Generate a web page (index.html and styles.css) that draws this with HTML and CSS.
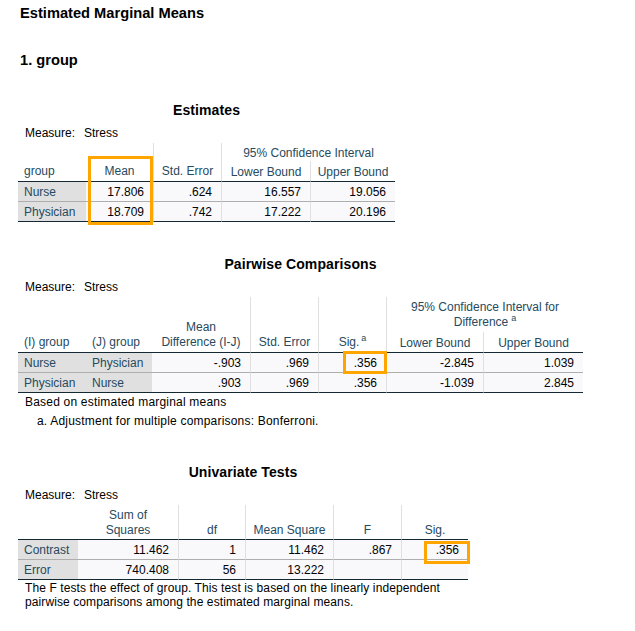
FILE: index.html
```html
<!DOCTYPE html>
<html>
<head>
<meta charset="utf-8">
<title>Estimated Marginal Means</title>
<link rel="stylesheet" href="styles.css">
</head>
<body>
<div class="page">
  <h1 class="title">Estimated Marginal Means</h1>
  <h2 class="subtitle">1. group</h2>

  <section class="block">
    <div class="caption w-est">Estimates</div>
    <div class="measure"><span class="mlabel">Measure:</span>Stress</div>
    <div class="tablewrap">
      <table class="spss t-est">
        <colgroup>
          <col class="e1"><col class="e2"><col class="e3"><col class="e4"><col class="e5">
        </colgroup>
        <thead>
          <tr>
            <th rowspan="2" class="lab hb">group</th>
            <th rowspan="2" class="hb">Mean</th>
            <th rowspan="2" class="sep hb">Std. Error</th>
            <th colspan="2" class="sep top1">95% Confidence Interval</th>
          </tr>
          <tr>
            <th class="sep hb l20">Lower Bound</th>
            <th class="sep hb l20">Upper Bound</th>
          </tr>
        </thead>
        <tbody>
          <tr>
            <td class="lab">Nurse</td>
            <td>17.806</td>
            <td class="sep">.624</td>
            <td class="sep">16.557</td>
            <td class="sep">19.056</td>
          </tr>
          <tr class="lastrow">
            <td class="lab">Physician</td>
            <td>18.709</td>
            <td class="sep">.742</td>
            <td class="sep">17.222</td>
            <td class="sep">20.196</td>
          </tr>
        </tbody>
      </table>
      <div class="hl hl-est"></div>
    </div>
  </section>

  <section class="block">
    <div class="caption w-pw gap33">Pairwise Comparisons</div>
    <div class="measure"><span class="mlabel">Measure:</span>Stress</div>
    <div class="tablewrap">
      <table class="spss t-pw">
        <colgroup>
          <col class="p1"><col class="p2"><col class="p3"><col class="p4"><col class="p5"><col class="p6"><col class="p7">
        </colgroup>
        <thead>
          <tr>
            <th rowspan="2" class="lab hb">(I) group</th>
            <th rowspan="2" class="lab hb">(J) group</th>
            <th rowspan="2" class="hb">Mean<br>Difference (I-J)</th>
            <th rowspan="2" class="sep hb">Std. Error</th>
            <th rowspan="2" class="sep hb">Sig.<span class="sup">a</span></th>
            <th colspan="2" class="sep two">95% Confidence Interval for<br>Difference<span class="sup sp3">a</span></th>
          </tr>
          <tr>
            <th class="sep hb l20">Lower Bound</th>
            <th class="sep hb l20">Upper Bound</th>
          </tr>
        </thead>
        <tbody>
          <tr>
            <td class="lab">Nurse</td>
            <td class="lab">Physician</td>
            <td>-.903</td>
            <td class="sep">.969</td>
            <td class="sep">.356</td>
            <td class="sep">-2.845</td>
            <td class="sep">1.039</td>
          </tr>
          <tr class="lastrow">
            <td class="lab">Physician</td>
            <td class="lab">Nurse</td>
            <td>.903</td>
            <td class="sep">.969</td>
            <td class="sep">.356</td>
            <td class="sep">-1.039</td>
            <td class="sep">2.845</td>
          </tr>
        </tbody>
      </table>
      <div class="hl hl-pw"></div>
    </div>
    <div class="foot">
      <div>Based on estimated marginal means</div>
      <div class="indent">a. Adjustment for multiple comparisons: Bonferroni.</div>
    </div>
  </section>

  <section class="block">
    <div class="caption w-uv">Univariate Tests</div>
    <div class="measure"><span class="mlabel">Measure:</span>Stress</div>
    <div class="tablewrap">
      <table class="spss t-uv">
        <colgroup>
          <col class="u1"><col class="u2"><col class="u3"><col class="u4"><col class="u5"><col class="u6">
        </colgroup>
        <thead>
          <tr class="uvhead">
            <th class="lab hb"></th>
            <th class="hb">Sum of<br>Squares</th>
            <th class="sep hb">df</th>
            <th class="sep hb">Mean Square</th>
            <th class="sep hb">F</th>
            <th class="sep hb">Sig.</th>
          </tr>
        </thead>
        <tbody>
          <tr>
            <td class="lab">Contrast</td>
            <td>11.462</td>
            <td class="sep">1</td>
            <td class="sep">11.462</td>
            <td class="sep">.867</td>
            <td class="sep">.356</td>
          </tr>
          <tr class="lastrow">
            <td class="lab">Error</td>
            <td>740.408</td>
            <td class="sep">56</td>
            <td class="sep">13.222</td>
            <td class="sep"></td>
            <td class="sep"></td>
          </tr>
        </tbody>
      </table>
      <div class="hl hl-uv"></div>
    </div>
    <div class="ufoot">The F tests the effect of group. This test is based on the linearly independent pairwise comparisons among the estimated marginal means.</div>
  </section>
</div>
</body>
</html>
```

FILE: styles.css
```css
* { box-sizing: border-box; }

body {
  margin: 0;
  background: #ffffff;
  font-family: "Liberation Sans", Arial, sans-serif;
  color: #000000;
}

.page {
  padding: 4px 0 0 18px;
}

.title,
.subtitle {
  margin: 0;
  padding-left: 2px;
  font-size: 14.67px;
  font-weight: bold;
  line-height: 18px;
}

.subtitle { margin-top: 29px; }

.caption {
  margin-top: 32px;
  font-size: 14px;
  font-weight: bold;
  line-height: 18px;
  text-align: center;
  letter-spacing: 0.1px;
}
.caption.gap33 { margin-top: 33px; }

.w-est { width: 377px; }
.w-pw { width: 565px; }
.w-uv { width: 450px; }

.measure {
  margin-top: 7px;
  padding-left: 7px;
  font-size: 12px;
  line-height: 15px;
}
.mlabel {
  display: inline-block;
  width: 59px;
}

.tablewrap {
  position: relative;
  margin-top: 2px;
}

table.spss {
  border-collapse: separate;
  border-spacing: 0;
  table-layout: fixed;
  font-size: 12px;
}
.t-est { width: 377px; }
.t-pw { width: 565px; }
.t-uv { width: 450px; }

.e1 { width: 68px; } .e2 { width: 67px; } .e3 { width: 68px; } .e4 { width: 89px; } .e5 { width: 85px; }
.p1 { width: 68px; } .p2 { width: 66px; } .p3 { width: 98px; } .p4 { width: 68px; } .p5 { width: 68px; } .p6 { width: 97px; } .p7 { width: 100px; }
.u1 { width: 60px; } .u2 { width: 100px; } .u3 { width: 67px; } .u4 { width: 88px; } .u5 { width: 68px; } .u6 { width: 67px; }

.spss th {
  font-weight: normal;
  color: #264a60;
  text-align: center;
  vertical-align: bottom;
  padding: 0 2px 2px;
  line-height: 15px;
  white-space: nowrap;
  background: #ffffff;
}
.spss th.lab {
  text-align: left;
  padding-left: 6px;
}
.spss th.hb { border-bottom: 1px solid #152935; }
.spss th.sep,
.spss td.sep { border-left: 1px solid #e0e0e0; }

.spss th.top1 {
  line-height: 16px;
  padding: 2px 2px 0;
  vertical-align: top;
}
.spss th.l20 {
  line-height: 18px;
  padding: 2px 2px 0;
}
.spss th.two {
  padding: 3px 2px 2px;
  vertical-align: top;
}
.spss .uvhead th {
  padding-top: 3px;
  padding-bottom: 1px;
}

.sup {
  position: relative;
  top: -5px;
  margin-left: 2px;
  font-size: 9px;
  line-height: 0;
}
.sup.sp3 { margin-left: 3px; }

.spss td {
  padding: 2px 9px 0 6px;
  line-height: 17px;
  border-bottom: 1px solid #aeaeae;
  background: #f9f9fb;
  color: #010205;
  text-align: right;
  white-space: nowrap;
}
.spss td.lab {
  background: #e0e0e0;
  color: #264a60;
  text-align: left;
}
.spss tr.lastrow td { border-bottom-color: #152935; }

.hl {
  position: absolute;
  border: 3px solid #ffa500;
}
.hl-est { left: 70px; top: 13px; width: 65px; height: 69px; }
.hl-pw { left: 325px; top: 54px; width: 44px; height: 23px; }
.hl-uv { left: 406px; top: 36px; width: 46px; height: 23px; }

.foot {
  padding-left: 7px;
  font-size: 12px;
  line-height: 19px;
  letter-spacing: 0.2px;
}
.foot .indent { padding-left: 12px; }

.ufoot {
  width: 452px;
  padding: 1px 0 0 7px;
  font-size: 12px;
  line-height: 14px;
  letter-spacing: 0.1px;
}
```
